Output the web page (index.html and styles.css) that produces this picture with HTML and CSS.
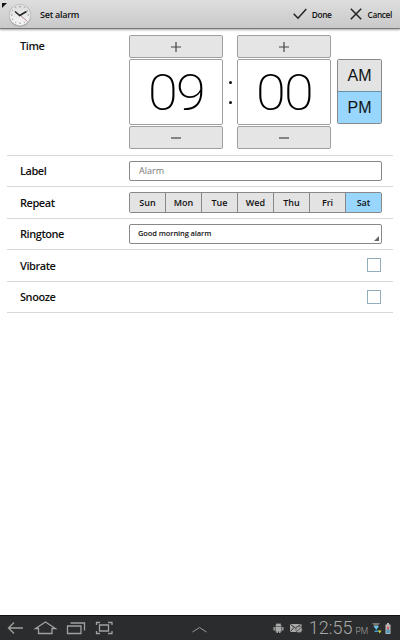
FILE: index.html
```
<!DOCTYPE html>
<html lang="en">
<head>
  <meta charset="UTF-8">
  <meta name="viewport" content="width=device-width, initial-scale=1.0">
  <title>Set alarm</title>
  <link rel="stylesheet" href="styles.css">
</head>
<body>
  <header class="top-bar">
    <span class="corner"></span>
    <svg class="clock-icon" width="24" height="24" viewBox="0 0 24 24" fill="none">
      <defs>
        <linearGradient id="face" x1="0" y1="0" x2="0" y2="1">
          <stop offset="0" stop-color="#dcdcdc"/>
          <stop offset="1" stop-color="#f8f8f8"/>
        </linearGradient>
      </defs>
      <circle cx="12" cy="12.4" r="11" fill="#8d8d8d"/>
      <circle cx="12" cy="12" r="10.7" fill="url(#face)" stroke="#c2c2c2" stroke-width=".8"/>
      <path d="M12 3v1.5M12 19.5V21M3 12h1.5M19.5 12H21M7.500 4.200l.5.9M16.500 4.200l-.5.9M4.200 7.500l.9.500M19.800 7.500l-.9.500M4.200 16.500l.9-.5M7.500 19.800l.5-.9M16.500 19.800l-.5-.9" stroke="#888"/>
      <path d="M12 12l7.500 6.500" stroke="#a07070" stroke-width=".8"/>
      <path d="M7 8.500l4.700 4L18.500 8.500" stroke="#222" stroke-width="1.500"/>
    </svg>
    <h1>Set alarm</h1>
    <button class="action done">
      <svg width="14" height="12" viewBox="0 0 14 12" fill="none" stroke="#222" stroke-width="1.500"><path d="M.7 5.800L5 10.200 13.300 1"/></svg>
      Done
    </button>
    <button class="action">
      <svg width="12" height="12" viewBox="0 0 12 12" fill="none" stroke="#222" stroke-width="1.500"><path d="M.8.800l10.400 10.400M11.200.800L.8 11.200"/></svg>
      Cancel
    </button>
  </header>

  <main class="form">
    <section class="row time-row">
      <span class="name">Time</span>
      <div class="picker">
        <div class="spinner">
          <button class="step"><svg width="10" height="10" viewBox="0 0 10 10" stroke="#444" stroke-width="1.200"><path d="M0 5h10M5 0v10"/></svg></button>
          <div class="value"><span>09</span></div>
          <button class="step"><svg width="10" height="10" viewBox="0 0 10 10" stroke="#444" stroke-width="1.200"><path d="M0 5h10"/></svg></button>
        </div>
        <div class="colon"><i></i><i></i></div>
        <div class="spinner">
          <button class="step"><svg width="10" height="10" viewBox="0 0 10 10" stroke="#444" stroke-width="1.200"><path d="M0 5h10M5 0v10"/></svg></button>
          <div class="value"><span>00</span></div>
          <button class="step"><svg width="10" height="10" viewBox="0 0 10 10" stroke="#444" stroke-width="1.200"><path d="M0 5h10"/></svg></button>
        </div>
        <div class="ampm">
          <button>AM</button>
          <button class="on">PM</button>
        </div>
      </div>
    </section>

    <section class="row">
      <span class="name">Label</span>
      <div class="field label-field">Alarm</div>
    </section>

    <section class="row">
      <span class="name">Repeat</span>
      <div class="days">
        <button>Sun</button>
        <button>Mon</button>
        <button>Tue</button>
        <button>Wed</button>
        <button>Thu</button>
        <button>Fri</button>
        <button class="on">Sat</button>
      </div>
    </section>

    <section class="row">
      <span class="name">Ringtone</span>
      <div class="field ringtone">
        <span>Good morning alarm</span>
        <svg width="5" height="5" viewBox="0 0 5 5" fill="#666"><path d="M5 0v5H0z"/></svg>
      </div>
    </section>

    <section class="row">
      <span class="name">Vibrate</span>
      <span class="check"></span>
    </section>

    <section class="row">
      <span class="name">Snooze</span>
      <span class="check"></span>
    </section>
  </main>

  <footer class="system-bar">
    <svg class="nav" width="108" height="16" viewBox="0 0 108 16" fill="none" stroke="#a0a0a0" stroke-width="1.300">
      <path d="M16 8H1.500M7 2.500L1.500 8 7 13.500"/>
      <path d="M28.500 8.500L38.500 2l10 6.500h-3.500V13.500H31.500V8.500z"/>
      <path d="M60.500 6h13.500v7.500H60.500zM63.500 3H77.500V10.500"/>
      <path d="M92.500 5h9v6h-9zM89.500 5V2.500H93M101 2.500h4V5M105 11v2.500h-4M93 13.500h-3.500V11"/>
    </svg>
    <svg class="chevron" width="15" height="7" viewBox="0 0 15 7" fill="none" stroke="#999"><path d="M.5 6l7-4.500 7 4.500"/></svg>
    <div class="status">
      <svg width="11" height="12" viewBox="0 0 11 12" fill="#aaa">
        <path d="M2.500 4.500a3 3 0 0 1 6 0zM2.500 5h6v4.500h-1V11H6V9.500H5V11H3.500V9.500h-1zM.5 5h1.300v3.500H.5zM9.200 5h1.300v3.500H9.200zM3 .8l1 1.500h-.7zM8 .8L7 2.300h.7z"/>
      </svg>
      <svg class="mail" width="13" height="10" viewBox="0 0 13 10">
        <path d="M0 1h11.500v8H0z" fill="#aaa"/>
        <path d="M.5 1.500l5 3.500 5-3.500M.5 8.500L4 4.500" fill="none" stroke="#333"/>
        <circle cx="9" cy="6.500" r="3.200" fill="#aaa" stroke="#444" stroke-width=".7"/>
        <path d="M7.500 8l3-3" stroke="#444"/>
      </svg>
      <span class="clock">12:55</span>
      <span class="pm">PM</span>
      <svg width="10" height="12" viewBox="0 0 10 12">
        <path d="M0 1h8L5 5H3z" fill="#777"/>
        <path d="M1.500 4h5.500L4.300 8z" fill="#62c5e8"/>
        <path d="M2.500 8.500h4v1.500h-4z" fill="#3d9fc7"/>
        <path d="M6 8.500h3.500L7.800 11.500z" fill="#d5dc35"/>
      </svg>
      <svg class="battery" width="6" height="11" viewBox="0 0 6 11">
        <path d="M2 0h2v1.500h1.500V11H.5V1.500H2z" fill="#bbb"/>
        <path d="M1.300 6.500h3.400v3.700H1.300z" fill="#4a9cc0"/>
        <path d="M3.500 2L1.700 5.500h1.500L2.500 8.500l2-4H3z" fill="#d33"/>
      </svg>
    </div>
  </footer>
</body>
</html>
```

FILE: styles.css
```
* {
  box-sizing: border-box;
}
body {
  margin: 0;
  height: 640px;
  display: flex;
  flex-direction: column;
  background: #fff;
  color: #111;
  font-family: 'Open Sans', 'Noto Sans', sans-serif;
  font-weight: 600;
  overflow: hidden;
}
button {
  margin: 0;
  padding: 0;
  border: none;
  background: none;
  color: inherit;
  font: inherit;
  cursor: pointer;
}
.top-bar {
  position: relative;
  flex: none;
  height: 29px;
  padding: 0 8px;
  display: flex;
  align-items: center;
  background: linear-gradient(#dedede, #c9c9c9);
  border-bottom: 1px solid #777;
  box-shadow: 0 1px 2px rgba(0, 0, 0, 0.35);
}
.corner {
  position: absolute;
  left: 2px;
  top: 3px;
  border-top: 5px solid #111;
  border-right: 5px solid transparent;
}
.clock-icon {
  margin-top: 1px;
}
.top-bar h1 {
  flex: 1;
  margin: 0 0 0 8px;
  font-size: 9px;
  font-weight: 600;
  letter-spacing: -0.25px;
}
.action {
  display: flex;
  align-items: center;
  font-size: 8.3px;
  letter-spacing: -0.35px;
}
.action svg {
  margin-right: 5px;
}
.action.done {
  margin-right: 18px;
}
.action:last-child svg {
  margin-right: 6px;
}
.form {
  flex: 1;
  padding: 0 7px;
}
.row {
  height: 31.5px;
  padding: 0 11px 0 13px;
  display: flex;
  align-items: center;
  border-bottom: 1px solid #d8d8d8;
}
.name {
  width: 109px;
  flex: none;
  font-size: 11px;
  letter-spacing: -0.45px;
}
.time-row {
  height: 126.5px;
  align-items: flex-start;
  padding-top: 6px;
}
.time-row .name {
  line-height: 22px;
}
.picker {
  display: flex;
}
.spinner {
  width: 94px;
  display: flex;
  flex-direction: column;
  gap: 1px;
}
.step {
  height: 23px;
  display: flex;
  align-items: center;
  justify-content: center;
  background: #e5e5e5;
  border: 1px solid #a0a0a0;
  border-radius: 2px;
}
.value {
  height: 66px;
  line-height: 66px;
  text-align: center;
  border: 1px solid #a0a0a0;
  border-radius: 2px;
  color: #000;
  font-family: Roboto, sans-serif;
  font-size: 50px;
  font-weight: 200;
  letter-spacing: -1.5px;
}
.value span {
  display: inline-block;
  transform: scaleX(1.08);
}
.colon {
  width: 14px;
  display: flex;
  flex-direction: column;
  align-items: center;
  justify-content: center;
  gap: 17px;
}
.colon i {
  width: 3px;
  height: 3px;
  background: #111;
  border-radius: 50%;
}
.ampm {
  width: 45px;
  height: 65px;
  margin: 24px 0 0 6px;
  display: flex;
  flex-direction: column;
  border: 1px solid #888;
  border-radius: 2px;
  font-family: 'Liberation Sans', sans-serif;
  font-size: 16px;
  font-weight: 400;
  letter-spacing: -0.8px;
}
.ampm button {
  flex: 1;
  background: #e3e3e3;
}
.ampm .on {
  background: #99d6fd;
  border-top: 1px solid #6891a8;
}
.field {
  flex: 1;
  height: 20px;
  display: flex;
  align-items: center;
  border: 1px solid #888;
  border-radius: 2px;
}
.label-field {
  padding-left: 9px;
  color: #777;
  font-size: 9px;
  font-weight: 400;
}
.ringtone {
  padding: 0 2px 2px 8px;
  justify-content: space-between;
  font-size: 7.5px;
  letter-spacing: -0.1px;
}
.ringtone svg {
  align-self: flex-end;
}
.days {
  flex: 1;
  height: 21px;
  display: flex;
  border: 1px solid #888;
  border-radius: 2px;
  font-size: 9px;
  letter-spacing: -0.1px;
}
.days button {
  flex: 1;
  background: #e3e3e3;
  border-right: 1px solid #888;
}
.days .on {
  background: #99d6fd;
  border-right: none;
}
.check {
  width: 14px;
  height: 14px;
  margin: 0 1px 0 auto;
  border: 1px solid #94adba;
}
.system-bar {
  position: relative;
  flex: none;
  height: 25px;
  padding: 0 9px 0 7px;
  display: flex;
  align-items: center;
  justify-content: space-between;
  background: #2b2c2d;
  border-top: 1px solid #111;
}
.chevron {
  position: absolute;
  left: 192px;
  top: 10px;
}
.status {
  display: flex;
  align-items: center;
  color: #a8a8a8;
  font-family: Roboto, sans-serif;
  font-weight: 300;
}
.mail {
  margin: 0 6px;
}
.clock {
  font-size: 18px;
  line-height: 24px;
}
.pm {
  margin: 5px 4px 0 3px;
  font-size: 8.5px;
}
.battery {
  margin-left: 3px;
}
```
